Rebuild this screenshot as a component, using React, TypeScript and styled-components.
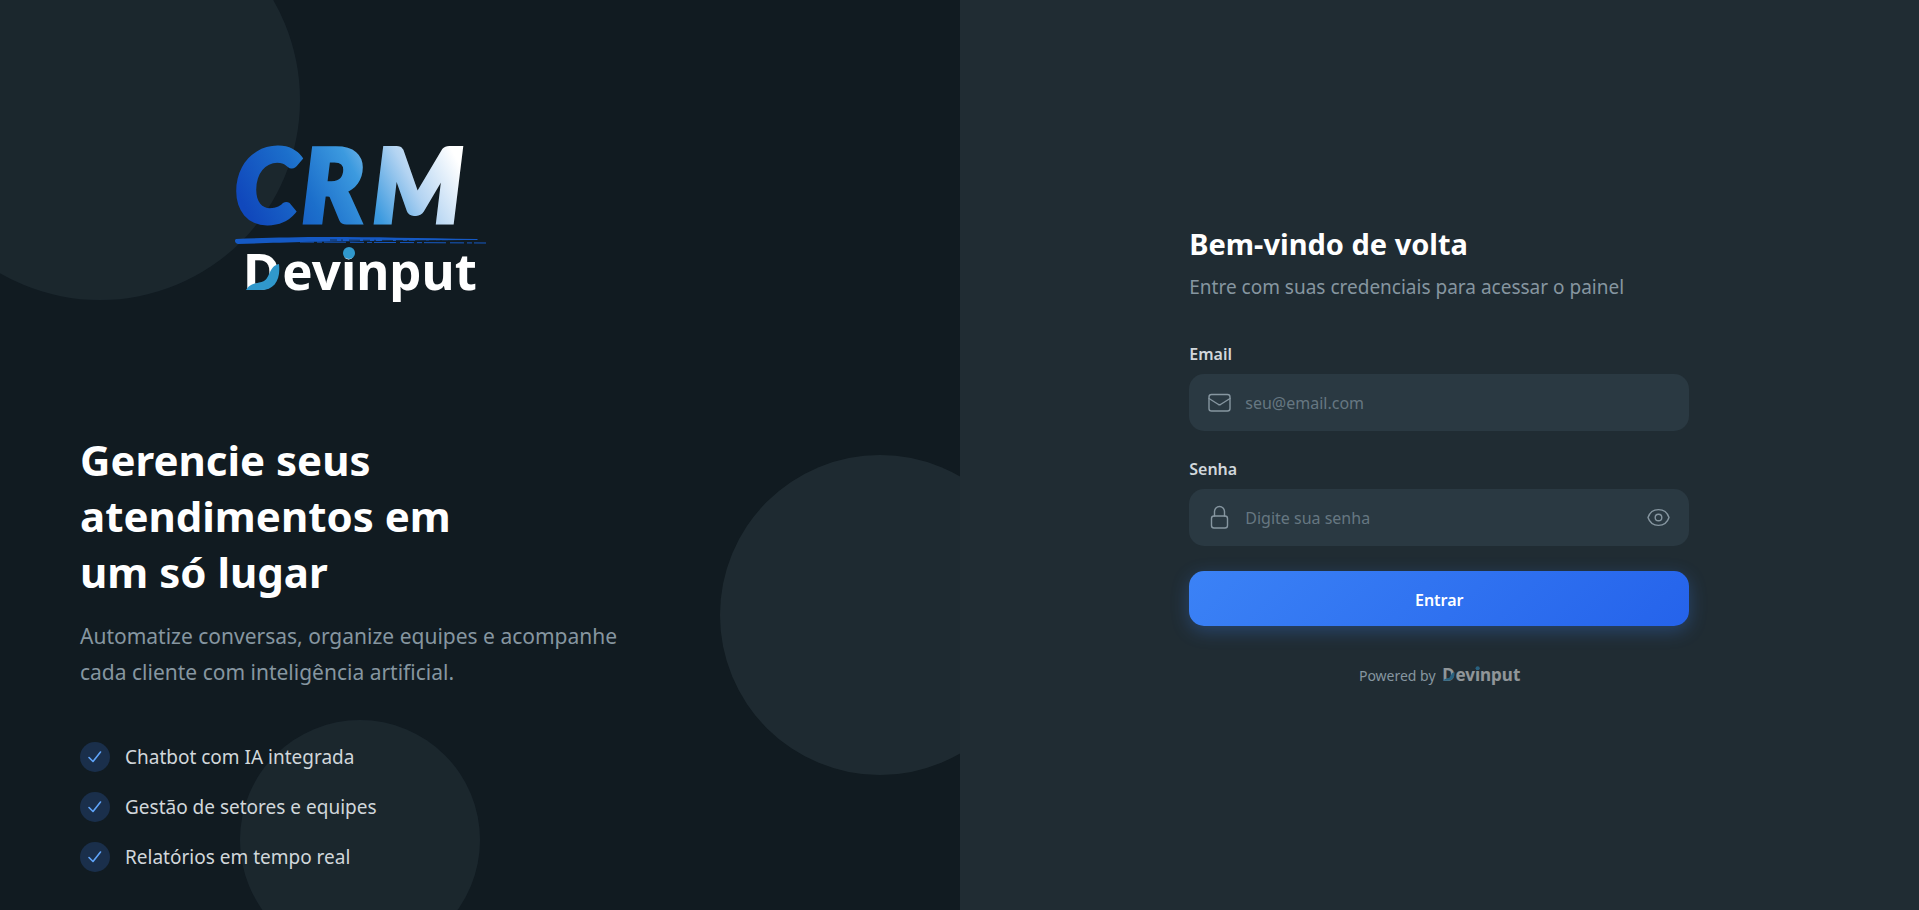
import React, { useState } from "react";
import styled, { createGlobalStyle } from "styled-components";

const GlobalStyle = createGlobalStyle`
  *, *::before, *::after { box-sizing: border-box; }
  body {
    margin: 0;
    background: #111b21;
    color: #e9edef;
    font-family: "Segoe UI", "Noto Sans", "Open Sans", sans-serif;
  }
  h1, h2, p, ul { margin: 0; padding: 0; }
`;

const Page = styled.main`
  display: grid;
  grid-template-columns: 1fr 1fr;
  min-height: 100vh;
`;

const BrandPanel = styled.section`
  position: relative;
  overflow: hidden;
  display: flex;
  flex-direction: column;
  justify-content: center;
  align-items: flex-start;
  padding: 24px 80px;
  background: #111b21;
`;

const Bubble = styled.span<{ $size: number; $place: string; $alpha: number }>`
  position: absolute;
  ${(p) => p.$place}
  width: ${(p) => p.$size}px;
  height: ${(p) => p.$size}px;
  border-radius: 50%;
  background: #202c33;
  opacity: ${(p) => p.$alpha};
`;

const BrandContent = styled.div`
  position: relative;
`;

const LogoFrame = styled.div`
  display: flex;
  justify-content: center;
  padding: 106px 0 128px;
  width: 560px;
  max-width: 100%;
`;

const LogoSvg = styled.svg`
  display: block;
  overflow: visible;
`;

const Headline = styled.h1`
  max-width: 400px;
  font-size: 42px;
  line-height: 56px;
  font-weight: 700;
  color: #ffffff;
`;

const Lead = styled.p`
  max-width: 560px;
  margin-top: 18px;
  font-size: 21px;
  line-height: 36px;
  color: #8696a0;
`;

const Features = styled.ul`
  display: flex;
  flex-direction: column;
  gap: 20px;
  margin-top: 52px;
  list-style: none;
`;

const Feature = styled.li`
  display: flex;
  align-items: center;
  gap: 15px;
  font-size: 19px;
  line-height: 30px;
  color: #d1d7db;
`;

const Tick = styled.span`
  display: grid;
  place-items: center;
  width: 30px;
  height: 30px;
  border-radius: 50%;
  background: #1a2f4b;
`;

const FormPanel = styled.section`
  display: flex;
  align-items: center;
  justify-content: center;
  padding: 32px;
  background: #202c33;
`;

const Form = styled.form`
  display: flex;
  flex-direction: column;
  width: 100%;
  max-width: 500px;
`;

const Title = styled.h2`
  font-size: 29px;
  line-height: 42px;
  font-weight: 700;
  color: #ffffff;
`;

const Subtitle = styled.p`
  margin-top: 8px;
  font-size: 19px;
  line-height: 28px;
  color: #8696a0;
`;

const Fields = styled.div`
  display: flex;
  flex-direction: column;
  gap: 25px;
  margin: 40px 0 25px;
`;

const Field = styled.div`
  display: flex;
  flex-direction: column;
  gap: 6px;
`;

const Label = styled.label`
  font-size: 16px;
  line-height: 27px;
  font-weight: 600;
  color: #d1d7db;
`;

const InputBox = styled.div`
  display: flex;
  align-items: center;
  gap: 12px;
  height: 57px;
  padding: 0 17px;
  border-radius: 15px;
  background: #2a3942;
  color: #8696a0;
`;

const Input = styled.input`
  flex: 1;
  min-width: 0;
  padding: 2px 0 0;
  border: 0;
  outline: 0;
  background: transparent;
  font: inherit;
  font-size: 16px;
  line-height: 24px;
  color: #e9edef;
  &::placeholder { color: #667781; opacity: 1; }
`;

const IconButton = styled.button`
  display: flex;
  padding: 0;
  border: 0;
  background: none;
  color: inherit;
  cursor: pointer;
`;

const Submit = styled.button`
  height: 55px;
  padding: 3px 0 0;
  border: 0;
  border-radius: 15px;
  background: linear-gradient(135deg, #3b82f6, #2563eb);
  box-shadow: 0 5px 18px rgba(59, 130, 246, 0.3);
  font: inherit;
  font-size: 16px;
  font-weight: 600;
  color: #ffffff;
  cursor: pointer;
`;

const Powered = styled.p`
  display: flex;
  align-items: center;
  justify-content: center;
  gap: 7px;
  margin-top: 38px;
  font-size: 14px;
  line-height: 24px;
  color: #8696a0;
`;

const Faded = styled.span`
  display: flex;
  opacity: 0.5;
`;

const DevinputMark = () => (
  <>
    <text x="243" y="289" dx="0 2" fontFamily="Noto Sans" fontWeight="700" fontSize="51" fill="#ffffff">Devinput</text>
    <path d="M246 289 C251 281 258 283 264 280 C270 277 269 265 279 263 C281 279 274 290 259 289 Z" fill="#3098cc" />
    <circle cx="349" cy="252" r="6" fill="#3098cc" />
  </>
);

const BrandLogo = () => (
  <LogoSvg width="252" height="160" viewBox="234 143 252 160" role="img" aria-label="CRM Devinput">
    <defs>
      <linearGradient id="crm" gradientUnits="userSpaceOnUse" x1="262" y1="238" x2="446" y2="138">
        <stop offset="0" stopColor="#1048bc" />
        <stop offset="0.3" stopColor="#1c6fcb" />
        <stop offset="0.54" stopColor="#3c9adf" />
        <stop offset="0.76" stopColor="#b4d4f2" />
        <stop offset="1" stopColor="#ffffff" />
      </linearGradient>
    </defs>
    <text
      x="235 302 373"
      y="221"
      fontFamily="Lato"
      fontStyle="italic"
      fontWeight="900"
      fontSize="101"
      fill="url(#crm)"
      stroke="url(#crm)"
      strokeWidth="5"
    >
      CRM
    </text>
    <path d="M236 238 C262 237 290 236 330 236 C370 236 420 237 477 238 L478 239 C440 239 410 240 380 240 C320 240 270 242 238 243 C235 242 234 239 236 238 Z" fill="#1559c4" />
    <path d="M300 241 L486 242" stroke="#1559c4" strokeWidth="1" strokeDasharray="14 3 5 2 22 4" />
    <path d="M330 239 L460 240" stroke="#111b21" strokeWidth="0.7" strokeDasharray="7 4 2 6 11 3" />
    <DevinputMark />
  </LogoSvg>
);

const SmallLogo = () => (
  <LogoSvg width="77" height="20" viewBox="245 245 231 60" role="img" aria-label="Devinput">
    <DevinputMark />
  </LogoSvg>
);

const CheckIcon = () => (
  <svg width="16" height="16" viewBox="0 0 16 16" fill="none" stroke="#60a5fa" strokeWidth="1.6" strokeLinecap="round" strokeLinejoin="round" aria-hidden="true">
    <path d="M2 8.5 L6 12.5 L13.5 3" />
  </svg>
);

const iconProps = {
  width: 27, height: 27, viewBox: "0 0 27 27", fill: "none", stroke: "currentColor",
  strokeWidth: 1.4, strokeLinecap: "round", strokeLinejoin: "round", "aria-hidden": true,
} as const;

const MailIcon = () => (
  <svg {...iconProps}>
    <rect x="3" y="5.5" width="21" height="16.5" rx="2.5" />
    <path d="M3 9.500 L12.500 15.500 Q13.500 16 14.500 15.500 L24 9.500" />
  </svg>
);

const LockIcon = () => (
  <svg {...iconProps}>
    <rect x="5.500" y="12" width="16" height="12" rx="2.500" />
    <path d="M8.500 12 V7.500 a5 5 0 0 1 10 0 V12" />
  </svg>
);

const EyeIcon = () => (
  <svg {...iconProps}>
    <path d="M3 13.500 C6.500 3 20.500 3 24 13.500 C20.500 24 6.500 24 3 13.500 Z" />
    <circle cx="13.500" cy="13.500" r="3.300" />
  </svg>
);

const features = ["Chatbot com IA integrada", "Gestão de setores e equipes", "Relatórios em tempo real"];

export default function App() {
  const [visible, setVisible] = useState(false);
  return (
    <>
      <GlobalStyle />
      <Page>
        <BrandPanel>
          <Bubble $size={400} $place="top: -100px; left: -100px;" $alpha={0.7} />
          <Bubble $size={320} $place="top: 50%; right: -80px;" $alpha={0.9} />
          <Bubble $size={240} $place="bottom: -50px; left: 25%;" $alpha={0.7} />
          <BrandContent>
            <LogoFrame><BrandLogo /></LogoFrame>
            <Headline>Gerencie seus atendimentos em um só lugar</Headline>
            <Lead>Automatize conversas, organize equipes e acompanhe cada cliente com inteligência artificial.</Lead>
            <Features>
              {features.map((f) => (
                <Feature key={f}><Tick><CheckIcon /></Tick>{f}</Feature>
              ))}
            </Features>
          </BrandContent>
        </BrandPanel>
        <FormPanel>
          <Form onSubmit={(e) => e.preventDefault()}>
            <Title>Bem-vindo de volta</Title>
            <Subtitle>Entre com suas credenciais para acessar o painel</Subtitle>
            <Fields>
              <Field>
                <Label htmlFor="email">Email</Label>
                <InputBox>
                  <MailIcon />
                  <Input id="email" type="email" placeholder="seu@email.com" />
                </InputBox>
              </Field>
              <Field>
                <Label htmlFor="senha">Senha</Label>
                <InputBox>
                  <LockIcon />
                  <Input id="senha" type={visible ? "text" : "password"} placeholder="Digite sua senha" />
                  <IconButton type="button" aria-label="Mostrar senha" onClick={() => setVisible(!visible)}>
                    <EyeIcon />
                  </IconButton>
                </InputBox>
              </Field>
            </Fields>
            <Submit type="submit">Entrar</Submit>
            <Powered>Powered by <Faded><SmallLogo /></Faded></Powered>
          </Form>
        </FormPanel>
      </Page>
    </>
  );
}
